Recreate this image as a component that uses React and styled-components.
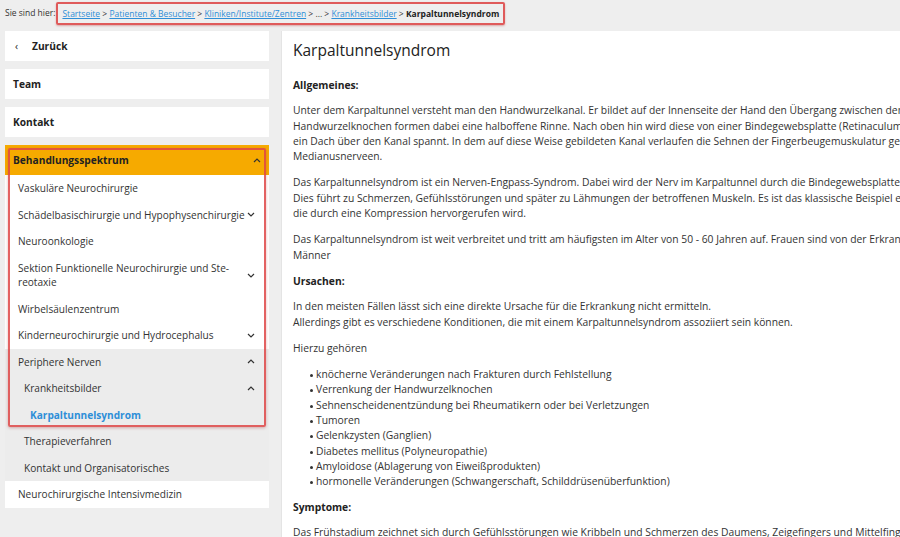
import React from "react";
import styled, { createGlobalStyle } from "styled-components";

const GlobalStyle = createGlobalStyle`
  html, body {
    margin: 0;
    padding: 0;
    background: #eeeeee;
    overflow: hidden;
  }
  body {
    font-family: "Open Sans", "DejaVu Sans", sans-serif;
    color: #333;
  }
`;

const Page = styled.div`
  width: 900px;
  height: 537px;
  overflow: hidden;
  padding: 0 0 0 5px;
  box-sizing: border-box;
`;

const Breadcrumb = styled.div`
  height: 31px;
  display: flex;
  align-items: flex-start;
  padding-top: 2px;
  box-sizing: border-box;
  font-size: 8.5px;
  color: #333;
`;

const BreadLabel = styled.span`
  padding-top: 5px;
  margin-right: 1px;
`;

const BreadTrail = styled.span`
  display: flex;
  align-items: center;
  white-space: pre;
  height: 23px;
  padding: 0 4px;
  border: 2px solid #df5a5a;
  border-radius: 2px;
  box-sizing: border-box;
  box-shadow: 0 1px 2px rgba(180, 40, 40, 0.35);
`;

const Crumb = styled.a`
  color: #2e8fd8;
  text-decoration: underline;
`;

const Current = styled.b`
  color: #222;
  font-weight: 700;
`;

const Layout = styled.div`
  display: flex;
  gap: 12px;
  align-items: flex-start;
`;

const Sidebar = styled.nav`
  position: relative;
  width: 264px;
  flex-shrink: 0;
  display: flex;
  flex-direction: column;
  gap: 8px;
`;

const TopItem = styled.div`
  height: 30px;
  display: flex;
  align-items: center;
  padding: 0 8px;
  background: ${(p) => (p.$active ? "#f6aa00" : "#fff")};
  font-size: 10.2px;
  font-weight: 700;
  color: #222;
  justify-content: ${(p) => (p.$start ? "flex-start" : "space-between")};
  box-sizing: border-box;
`;

const BackArrow = styled.span`
  display: inline-block;
  width: 17px;
  padding-left: 2px;
  font-weight: 400;
`;

const Group = styled.div`
  display: flex;
  flex-direction: column;
`;

const SubList = styled.div`
  display: flex;
  flex-direction: column;
  background: ${(p) => (p.$grey ? "#ececec" : "#fff")};
`;

const SubItem = styled.div`
  display: flex;
  align-items: center;
  justify-content: space-between;
  gap: 2px;
  padding: 6px 14px 6px ${(p) => p.$indent || 13}px;
  font-size: 10.1px;
  line-height: 14.5px;
  color: ${(p) => (p.$current ? "#2e8fd8" : "#333")};
  font-weight: ${(p) => (p.$current ? 700 : 400)};
`;

const SubLabel = styled.span`
  max-width: 232px;
`;

const Highlight = styled.div`
  position: absolute;
  left: 3px;
  top: 117px;
  width: 258px;
  height: 279px;
  border: 2px solid rgba(222, 70, 70, 0.85);
  border-radius: 2px;
  box-sizing: border-box;
  box-shadow: 0 1px 3px rgba(160, 40, 40, 0.35);
  pointer-events: none;
`;

const Main = styled.main`
  flex: 1;
  min-width: 700px;
  background: #fff;
  border-left: 1px solid #e4e4e4;
  padding: 8px 12px 0 11px;
  height: 506px;
  box-sizing: border-box;
  font-size: 10.3px;
  line-height: 15.3px;
  color: #333;
  white-space: nowrap;
`;

const Title = styled.h1`
  margin: 0 0 17px;
  font-size: 15.5px;
  line-height: 22px;
  font-weight: 400;
  color: #222;
`;

const Heading = styled.h3`
  margin: 0 0 10px;
  font-size: 10.3px;
  line-height: 15.3px;
  font-weight: 700;
  color: #222;
`;

const Para = styled.p`
  margin: 0 0 11px;
`;

const Bullets = styled.ul`
  margin: 0 0 10px;
  padding-left: 23px;
  list-style: none;
  li {
    position: relative;
  }
  li::before {
    content: "";
    position: absolute;
    left: -6px;
    top: 7px;
    width: 3px;
    height: 3px;
    border-radius: 50%;
    background: #333;
  }
`;

const Chevron = ({ up }) => (
  <svg width="8" height="5" viewBox="0 0 8 5" style={{ flexShrink: 0 }}>
    <polyline
      points={up ? "1,4 4,1 7,4" : "1,1 4,4 7,1"}
      fill="none"
      stroke="#333"
      strokeWidth="1.2"
    />
  </svg>
);

const upperItems = [
  { label: "Vaskuläre Neurochirurgie" },
  { label: "Schädelbasischirurgie und Hypophysenchirurgie", chevron: "down" },
  { label: "Neuroonkologie" },
  { label: "Sektion Funktionelle Neurochirurgie und Ste-\nreotaxie", chevron: "down" },
  { label: "Wirbelsäulenzentrum" },
  { label: "Kinderneurochirurgie und Hydrocephalus", chevron: "down" },
];

const greyItems = [
  { label: "Periphere Nerven", chevron: "up", indent: 13 },
  { label: "Krankheitsbilder", chevron: "up", indent: 19 },
  { label: "Karpaltunnelsyndrom", indent: 25, current: true },
  { label: "Therapieverfahren", indent: 19 },
  { label: "Kontakt und Organisatorisches", indent: 19 },
];

const renderItem = (item) => (
  <SubItem key={item.label} $indent={item.indent} $current={item.current}>
    <SubLabel>
      {item.label.split("\n").map((line, i) => (
        <React.Fragment key={i}>
          {i > 0 && <br />}
          {line}
        </React.Fragment>
      ))}
    </SubLabel>
    {item.chevron && <Chevron up={item.chevron === "up"} />}
  </SubItem>
);

const App = () => {
  return (
    <Page>
      <GlobalStyle />
      <Breadcrumb>
        <BreadLabel>Sie sind hier:</BreadLabel>
        <BreadTrail>
          <Crumb>Startseite</Crumb>{" > "}
          <Crumb>Patienten &amp; Besucher</Crumb>{" > "}
          <Crumb>Kliniken/Institute/Zentren</Crumb>{" > ... > "}
          <Crumb>Krankheitsbilder</Crumb>{" > "}
          <Current>Karpaltunnelsyndrom</Current>
        </BreadTrail>
      </Breadcrumb>

      <Layout>
        <Sidebar>
          <TopItem $start>
            <BackArrow>‹</BackArrow>Zurück
          </TopItem>
          <TopItem>Team</TopItem>
          <TopItem>Kontakt</TopItem>
          <Group>
            <TopItem $active>
              Behandlungsspektrum
              <Chevron up />
            </TopItem>
            <SubList>{upperItems.map(renderItem)}</SubList>
            <SubList $grey>{greyItems.map(renderItem)}</SubList>
            <SubList>
              {renderItem({ label: "Neurochirurgische Intensivmedizin" })}
            </SubList>
          </Group>
          <Highlight />
        </Sidebar>

        <Main>
          <Title>Karpaltunnelsyndrom</Title>
          <Heading>Allgemeines:</Heading>
          <Para>
            Unter dem Karpaltunnel versteht man den Handwurzelkanal. Er bildet auf der Innenseite der Hand den Übergang zwischen dem Unterarm und der Mittelhand. Die
            <br />
            Handwurzelknochen formen dabei eine halboffene Rinne. Nach oben hin wird diese von einer Bindegewebsplatte (Retinaculum flexorum) abgeschlossen, die sich wie
            <br />
            ein Dach über den Kanal spannt. In dem auf diese Weise gebildeten Kanal verlaufen die Sehnen der Fingerbeugemuskulatur gemeinsam mit dem
            <br />
            Medianusnerveen.
          </Para>
          <Para>
            Das Karpaltunnelsyndrom ist ein Nerven-Engpass-Syndrom. Dabei wird der Nerv im Karpaltunnel durch die Bindegewebsplatte eingeengt und geschädigt.
            <br />
            Dies führt zu Schmerzen, Gefühlsstörungen und später zu Lähmungen der betroffenen Muskeln. Es ist das klassische Beispiel einer Nervenschädigung,
            <br />
            die durch eine Kompression hervorgerufen wird.
          </Para>
          <Para>
            Das Karpaltunnelsyndrom ist weit verbreitet und tritt am häufigsten im Alter von 50 - 60 Jahren auf. Frauen sind von der Erkrankung häufiger betroffen als
            <br />
            Männer
          </Para>
          <Heading>Ursachen:</Heading>
          <Para>
            In den meisten Fällen lässt sich eine direkte Ursache für die Erkrankung nicht ermitteln.
            <br />
            Allerdings gibt es verschiedene Konditionen, die mit einem Karpaltunnelsyndrom assoziiert sein können.
          </Para>
          <Para>Hierzu gehören</Para>
          <Bullets>
            <li>knöcherne Veränderungen nach Frakturen durch Fehlstellung</li>
            <li>Verrenkung der Handwurzelknochen</li>
            <li>Sehnenscheidenentzündung bei Rheumatikern oder bei Verletzungen</li>
            <li>Tumoren</li>
            <li>Gelenkzysten (Ganglien)</li>
            <li>Diabetes mellitus (Polyneuropathie)</li>
            <li>Amyloidose (Ablagerung von Eiweißprodukten)</li>
            <li>hormonelle Veränderungen (Schwangerschaft, Schilddrüsenüberfunktion)</li>
          </Bullets>
          <Heading>Symptome:</Heading>
          <Para>
            Das Frühstadium zeichnet sich durch Gefühlsstörungen wie Kribbeln und Schmerzen des Daumens, Zeigefingers und Mittelfingers aus, die vor allem nachts auftreten.
          </Para>
        </Main>
      </Layout>
    </Page>
  );
};

export default App;
